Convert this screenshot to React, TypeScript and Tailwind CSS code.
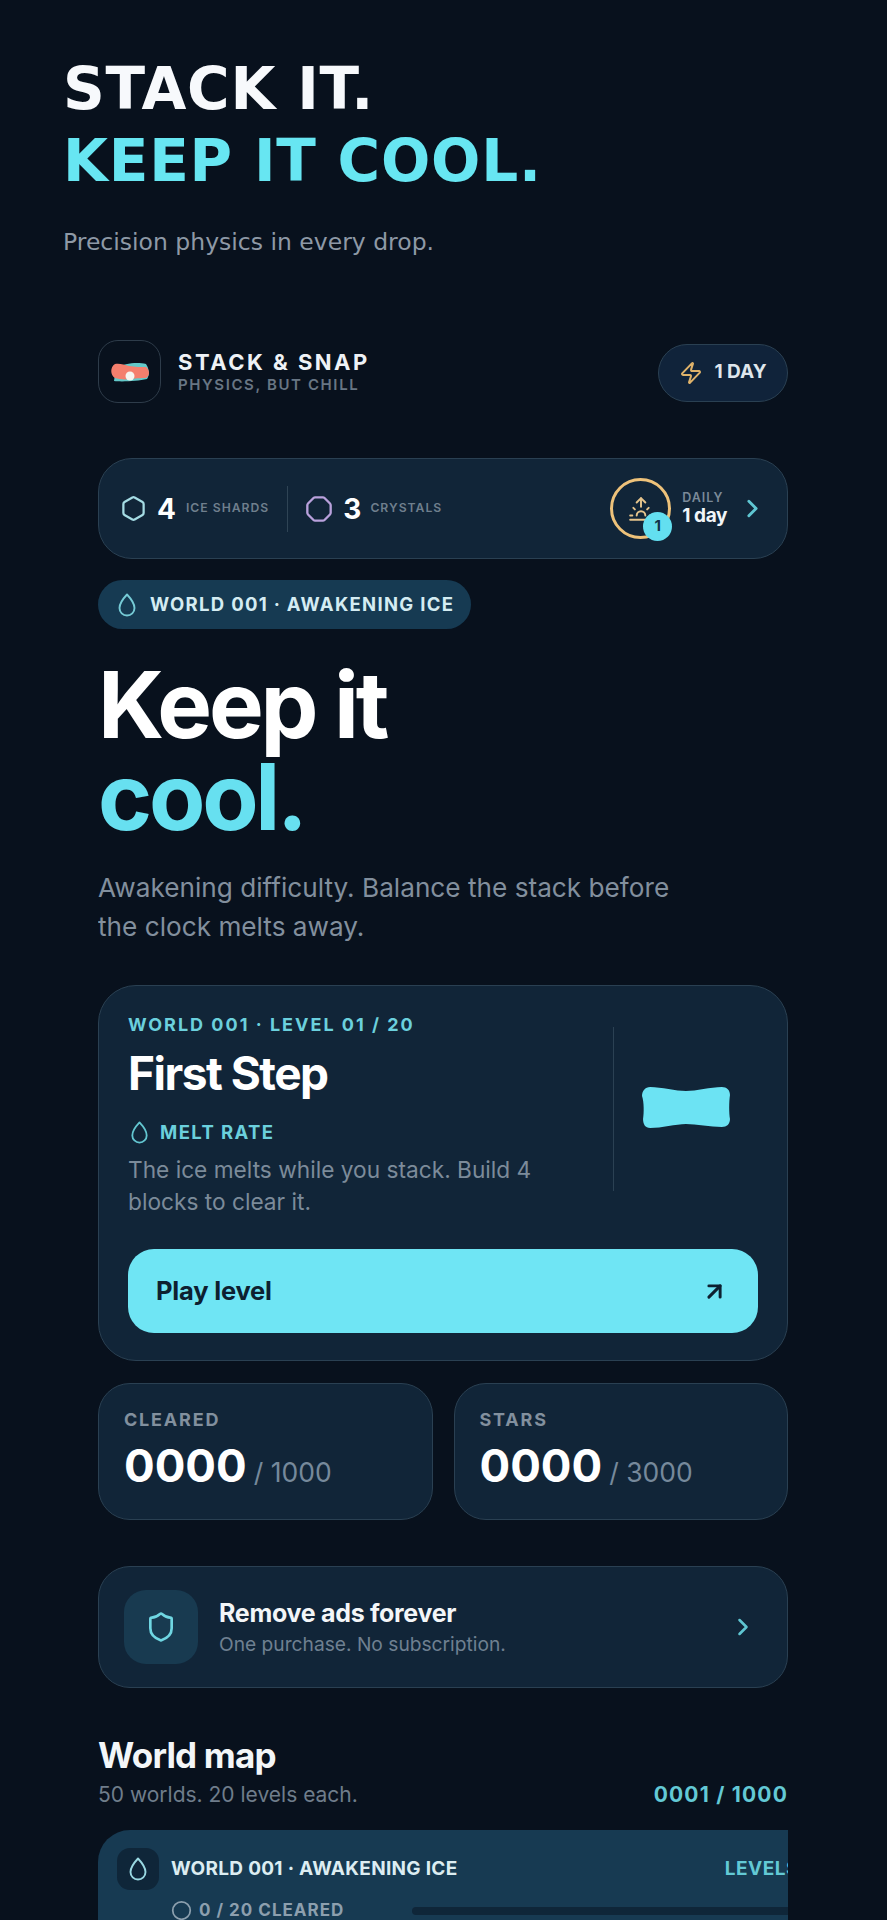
import { ArrowUpRight, ChevronRight, Circle, Hexagon, Octagon, Shield, Sunrise, Zap } from "lucide-react";

const card = "border border-[#2a4052] bg-[#112538]";

function Drop({ size, className }: { size: number; className: string }) {
  return (
    <svg width={size} height={size} viewBox="0 0 24 24" fill="none" stroke="currentColor" strokeWidth="1.9" strokeLinejoin="round" className={className}>
      <path d="M12 1.5 C12 1.5 4.5 9.5 4.5 15 a7.5 7.5 0 0 0 15 0 C19.5 9.5 12 1.5 12 1.5 Z" />
    </svg>
  );
}

function IceBlock() {
  return (
    <svg width="90" height="43" viewBox="0 0 88 43" preserveAspectRatio="none">
      <path
        d="M9 1 C20 1 34 5 44 5 C54 5 68 1 79 1 C84 1 87 4 87 9 C86 16 86 27 87 33 C87 38 84 41 79 41 C68 41 54 38 44 38 C34 38 20 42 9 42 C4 42 2 38 2 33 C3 27 3 16 1 10 C1 5 4 1 9 1 Z"
        fill="#6ce3f3"
      />
    </svg>
  );
}

function Logo() {
  return (
    <svg width="40" height="20" viewBox="0 0 40 20">
      <path d="M6 6 C14 1 28 0 36 2 C39 6 40 13 37 17 C28 19 12 20 4 19 Z" fill="#63c9c9" />
      <path d="M5 2 C10 1 14 3 19 4 C25 5 31 5 36 5 C40 8 40 14 36 16 C27 16 22 17 19 17 C14 18 9 17 5 16 C0 13 0 5 5 2 Z" fill="#f47f6d" />
      <circle cx="20" cy="14" r="4.5" fill="#f5f5f0" />
    </svg>
  );
}

function Stat({ label, value, total }: { label: string; value: string; total: string }) {
  return (
    <div className={`flex h-[137px] flex-1 flex-col rounded-[32px] px-[25px] pt-[25px] ${card}`}>
      <div className="text-[18px] leading-[22px] font-bold tracking-[1.8px] text-[#82909e]">{label}</div>
      <div className="mt-[7px] flex items-baseline">
        <span className="text-[45.5px] leading-[56px] font-bold text-white">{value}</span>
        <span className="ml-[7px] text-[26.5px] text-[#76899b]">/ {total}</span>
      </div>
    </div>
  );
}

export default function App() {
  return (
    <div className="h-[1920px] overflow-hidden bg-[#08111d] pt-[53px] font-['Inter',sans-serif]">
      <div className="pl-[63px] font-['DejaVu_Sans',sans-serif]">
        <h1 className="text-[58px] leading-[72px] font-bold tracking-[0.8px] text-[#f7f9fc]">STACK IT.</h1>
        <h1 className="text-[58px] leading-[72px] font-bold tracking-[0.8px] text-[#67e6f2]">KEEP IT COOL.</h1>
        <p className="mt-[30px] text-[23.5px] leading-[30px] text-[#8e99a6]">Precision physics in every drop.</p>
      </div>

      <div className="mx-[98px] mt-[83px] w-[690px] overflow-hidden">
        <div className="flex items-center justify-between">
          <div className="flex items-center gap-[17px]">
            <div className="flex h-[63px] w-[63px] items-center justify-center rounded-[20px] border border-[#2e3c4a]">
              <Logo />
            </div>
            <div>
              <div className="text-[22px] leading-[26px] font-bold tracking-[2.5px] text-[#eef2f6]">STACK &amp; SNAP</div>
              <div className="mt-[1px] text-[15px] leading-[18px] font-semibold tracking-[1.6px] text-[#687684]">PHYSICS, BUT CHILL</div>
            </div>
          </div>
          <div className="mt-[2px] flex h-[58px] w-[130px] items-center justify-center gap-[11px] rounded-full border border-[#2a4052] bg-[#10233a]">
            <Zap size={24} strokeWidth={2} className="text-[#e0b36a]" />
            <span className="text-[19px] font-bold text-[#dfe6ec]">1 DAY</span>
          </div>
        </div>

        <div className={`mt-[55px] flex h-[101px] items-center rounded-[34px] pr-[25px] pl-[21px] ${card}`}>
          <Hexagon size={27} strokeWidth={2} className="text-[#a5dce4]" />
          <span className="ml-[10px] text-[28px] font-bold text-white">4</span>
          <span className="ml-[10px] text-[12.2px] font-semibold tracking-[1px] text-[#6f7f8d]">ICE SHARDS</span>
          <div className="mr-[17px] ml-[18px] h-[46px] w-px bg-[#2f4455]" />
          <Octagon size={28} strokeWidth={2} className="text-[#b9a1dc]" />
          <span className="ml-[10px] text-[28px] font-bold text-white">3</span>
          <span className="ml-[9px] text-[12.2px] font-semibold tracking-[1px] text-[#6f7f8d]">CRYSTALS</span>
          <div className="relative ml-auto flex h-[61px] w-[61px] items-center justify-center rounded-full border-[3px] border-[#eec27a]">
            <Sunrise size={26} strokeWidth={1.8} className="text-[#e5c48c]" />
            <div className="absolute top-[31px] left-[30px] flex h-[29px] w-[29px] items-center justify-center rounded-full bg-[#63dff0] text-[15px] font-bold text-[#11324a]">1</div>
          </div>
          <div className="ml-[11px]">
            <div className="text-[12.5px] leading-[14px] font-semibold tracking-[1px] text-[#7b8a98]">DAILY</div>
            <div className="text-[19px] leading-[22px] font-bold tracking-[-0.4px] text-[#f1f5f8]">1 day</div>
          </div>
          <ChevronRight size={29} strokeWidth={2.4} className="ml-[11px] -mr-[5px] text-[#5fc6d2]" />
        </div>

        <div className="mt-[21px] flex h-[49px] w-[373px] items-center gap-[11px] rounded-full bg-[#163a52] pl-[17px]">
          <Drop size={24} className="text-[#76cbd6]" />
          <span className="text-[18.5px] font-bold tracking-[1.3px] text-[#d4ecf2]">WORLD 001 · AWAKENING ICE</span>
        </div>

        <h2 className="mt-[29px] text-[92px] leading-[93px] font-bold tracking-[-3.2px] text-white">Keep it</h2>
        <h2 className="text-[92px] leading-[92px] font-bold tracking-[-3.2px] text-[#67e0f0]">cool.</h2>
        <p className="mt-[25px] w-[600px] text-[26.2px] leading-[39px] text-[#828f9d]">Awakening difficulty. Balance the stack before the clock melts away.</p>

        <div className={`mt-[39px] h-[376px] rounded-[38px] px-[29px] pt-[27px] ${card}`}>
          <div className="flex h-[192px]">
            <div className="flex-1">
              <div className="text-[18px] leading-[24px] font-bold tracking-[2px] text-[#6bd0dd]">WORLD 001 · LEVEL 01 / 20</div>
              <div className="mt-[8px] text-[46px] leading-[56px] font-bold tracking-[-1.5px] text-white">First Step</div>
              <div className="mt-[18px] flex items-center gap-[9px]">
                <Drop size={23} className="text-[#63c6d0]" />
                <span className="text-[18.5px] font-bold tracking-[1.4px] text-[#6bd0dd]">MELT RATE</span>
              </div>
              <p className="mt-[7px] w-[430px] text-[22.7px] leading-[32px] text-[#7c8b9a]">The ice melts while you stack. Build 4 blocks to clear it.</p>
            </div>
            <div className="mt-[14px] h-[164px] w-px bg-[#2b4153]" />
            <div className="flex w-[144px] items-start justify-center pt-[73px]">
              <IceBlock />
            </div>
          </div>
          <div className="mt-[44px] flex h-[84px] items-center justify-between rounded-[26px] bg-[#6fe5f4] pr-[30px] pl-[28px]">
            <span className="text-[25.5px] font-bold tracking-[-0.2px] text-[#0d2030]">Play level</span>
            <ArrowUpRight size={27} strokeWidth={2.6} className="text-[#0d2030]" />
          </div>
        </div>

        <div className="mt-[22px] flex gap-[21px]">
          <Stat label="CLEARED" value="0000" total="1000" />
          <Stat label="STARS" value="0000" total="3000" />
        </div>

        <div className={`mt-[46px] flex h-[122px] items-center rounded-[32px] pr-[30px] pl-[25px] ${card}`}>
          <div className="flex h-[74px] w-[74px] items-center justify-center rounded-[22px] bg-[#183a50]">
            <Shield size={32} strokeWidth={2} className="text-[#6fd6e2]" />
          </div>
          <div className="ml-[21px] flex-1">
            <div className="text-[25px] leading-[32px] font-bold tracking-[-0.3px] text-[#f3f6f8]">Remove ads forever</div>
            <div className="mt-[2px] text-[19.2px] leading-[26px] text-[#6f8091]">One purchase. No subscription.</div>
          </div>
          <ChevronRight size={28} strokeWidth={2.2} className="text-[#5fc6d2]" />
        </div>

        <div className="mt-[47px] text-[35px] leading-[40px] font-bold tracking-[-0.8px] text-[#f3f6f8]">World map</div>
        <div className="mt-[5px] flex items-center justify-between">
          <span className="text-[21px] leading-[30px] text-[#6f7d8b]">50 worlds. 20 levels each.</span>
          <span className="text-[21px] leading-[30px] font-bold tracking-[1.2px] text-[#63c9d5]">0001 / 1000</span>
        </div>

        <div className="mt-[20px] w-[721px] rounded-t-[32px] bg-[#173a52] pt-[18px] pr-[20px] pl-[19px]">
          <div className="flex items-center justify-between">
            <div className="flex items-center">
              <div className="flex h-[42px] w-[42px] items-center justify-center rounded-[13px] bg-[#0f2639]">
                <Drop size={24} className="text-[#9ad9e2]" />
              </div>
              <span className="ml-[12px] text-[19px] font-bold tracking-[0.3px] text-[#dcedf2]">WORLD 001 · AWAKENING ICE</span>
            </div>
            <span className="text-[19px] font-bold tracking-[0.5px] text-[#63c9d5]">LEVELS</span>
          </div>
          <div className="mt-[8px] ml-[54px] flex items-center">
            <Circle size={21} strokeWidth={2} className="text-[#8c9fae]" />
            <span className="ml-[7px] text-[17px] font-bold tracking-[1px] text-[#8c9fae]">0 / 20 CLEARED</span>
            <div className="ml-[68px] h-[8px] flex-1 rounded-full bg-[#0f2639]" />
          </div>
        </div>
      </div>
    </div>
  );
}
